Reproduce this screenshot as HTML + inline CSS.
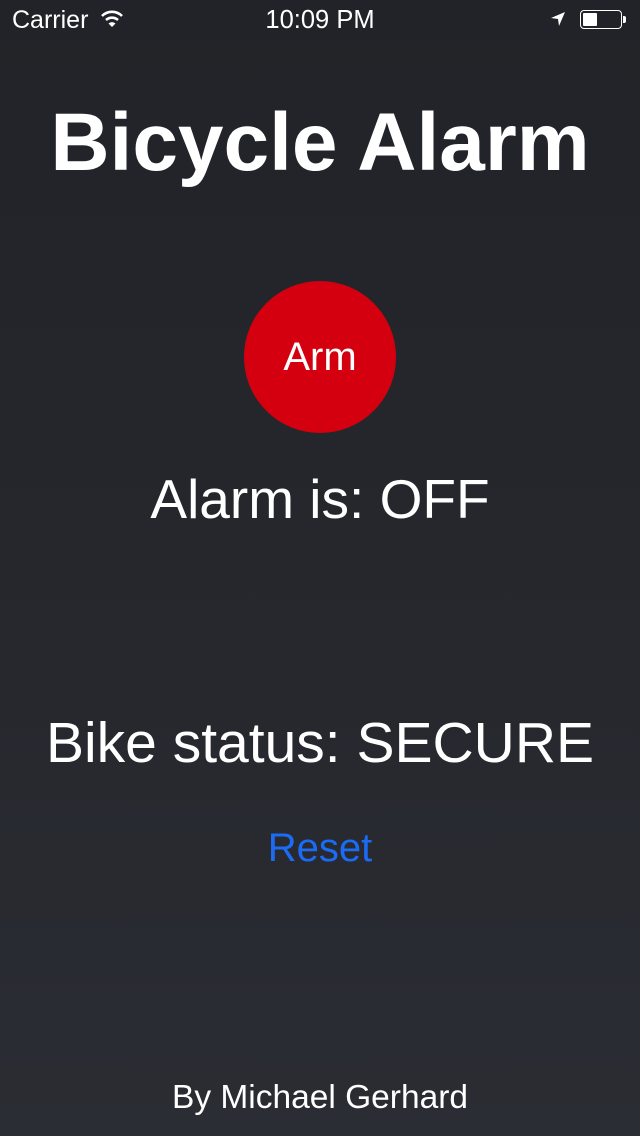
<!DOCTYPE html>
<html><head><meta charset="utf-8"><style>
html,body{margin:0;padding:0}
body{width:640px;height:1136px;overflow:hidden;background:linear-gradient(180deg,#222328 0%,#26282e 60%,#2a2d33 100%);font-family:"Liberation Sans",sans-serif;color:#fff;position:relative}
.a{position:absolute;left:0;width:640px;text-align:center;white-space:nowrap}
</style></head><body>
<div style="position:absolute;left:12px;top:6px;font-size:25px;">Carrier</div>
<svg style="position:absolute;left:100px;top:10px" width="24" height="18" viewBox="0 0 24 18"><path d="M2 6 A14 14 0 0 1 22 6" stroke="#fff" stroke-width="2.6" fill="none"/><path d="M6 10 A9 9 0 0 1 18 10" stroke="#fff" stroke-width="2.6" fill="none"/><path d="M12 17 L8.5 13.5 A5 5 0 0 1 15.5 13.5 Z" fill="#fff"/></svg>
<div class="a" style="top:6px;font-size:25.5px;">10:09 PM</div>
<svg style="position:absolute;left:550px;top:11px" width="16" height="16" viewBox="0 0 16 16"><path d="M15 1 L1 7 L8 8 L9 15 Z" fill="#fff"/></svg>
<div style="position:absolute;left:580px;top:10px;width:42px;height:19px;border:1.5px solid #fff;border-radius:4px;box-sizing:border-box"></div>
<div style="position:absolute;left:583px;top:13px;width:14px;height:13px;background:#fff;border-radius:1px"></div>
<div style="position:absolute;left:623px;top:16px;width:3px;height:7px;background:#fff;border-radius:0 2px 2px 0"></div>
<div class="a" style="top:96px;font-size:82px;font-weight:bold;">Bicycle Alarm</div>
<div style="position:absolute;left:244px;top:281px;width:152px;height:152px;border-radius:50%;background:#d5000f;color:#fff;font-size:40px;line-height:152px;text-align:center">Arm</div>
<div class="a" style="top:467px;font-size:55px;">Alarm is: OFF</div>
<div class="a" style="top:710px;font-size:57px;">Bike status: SECURE</div>
<div class="a" style="top:826px;font-size:40px;color:#1c6bf5;">Reset</div>
<div class="a" style="top:1079px;font-size:33.5px;">By Michael Gerhard</div>
</body></html>
